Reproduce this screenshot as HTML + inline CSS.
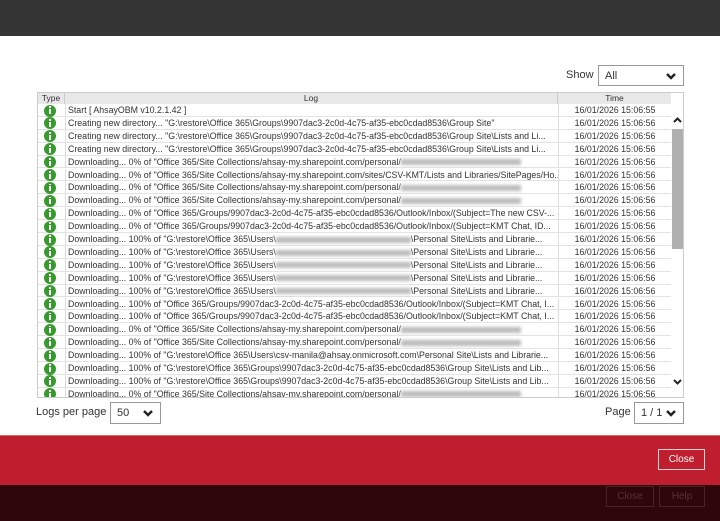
<!DOCTYPE html>
<html><head><meta charset="utf-8"><style>
*{margin:0;padding:0;box-sizing:border-box}
body{width:720px;height:521px;overflow:hidden;background:#fff;font-family:"Liberation Sans",sans-serif;position:relative;color:#333}
.top{position:absolute;left:0;top:0;width:720px;height:36px;background:#353535}
.red{position:absolute;left:0;top:435px;width:720px;height:50px;background:#be1e2d;border-top:1px solid #d66}
.dark{position:absolute;left:0;top:485px;width:720px;height:36px;background:#2d070c}
.sel{position:absolute;border:1px solid #999;background:#fff;font-size:11px;padding:4px 6px;color:#333}
.chev{position:absolute;right:6px;top:5px;width:12px;height:10px}
.tbl{position:absolute;left:37px;top:92px;width:647px;height:306px;border:1px solid #ccc;overflow:hidden}
.hdr{position:absolute;left:0;top:0;height:11px;width:633px;background:#e8e8e8;font-size:8.5px;line-height:11px;color:#333}
.hdr div{position:absolute;top:0;height:11px;text-align:center;border-right:1px solid #ccc}
.row{position:absolute;left:0;width:633px;height:12.9px;border-bottom:1px solid #e3e3e3;font-size:8.8px;line-height:12px;white-space:nowrap;color:#333}
.ic{position:absolute;left:6px;top:0.5px;width:12px;height:12px;border-radius:50%;background:#389a2e}
.ic:after{content:"";position:absolute;left:5px;top:4.5px;width:2.2px;height:5px;background:#fff}
.ic:before{content:"";position:absolute;left:5px;top:1.8px;width:2.2px;height:1.8px;background:#fff}
.lg{position:absolute;left:27px;top:0;width:493px;border-left:1px solid #ddd;padding-left:2px;overflow:hidden;height:12px}
.tm{position:absolute;left:520px;top:0;width:113px;border-left:1px solid #ddd;text-align:center}
.bl{display:inline-block;height:6px;background:#bbb;filter:blur(1.5px);vertical-align:middle}
.sb{position:absolute;left:633px;top:11px;width:13px;height:295px;background:#fff}
.btn{position:absolute;font-size:10px;text-align:center;line-height:19px}
</style></head><body>
<div class="top"></div>
<div style="position:absolute;left:566px;top:69px;font-size:11px">Show</div>
<div class="sel" style="left:598px;top:65px;width:86px;height:21px">All<svg class="chev" viewBox="0 0 12 10"><path d="M2 3l4 4 4-4" stroke="#222" stroke-width="2.4" fill="none"/></svg></div>
<div class="tbl">
<div class="hdr"><div style="left:0;width:27px">Type</div><div style="left:27px;width:493px">Log</div><div style="left:520px;width:113px;border:0">Time</div></div>
<div id="rows"></div>
<div class="sb"><svg style="position:absolute;left:1px;top:12px" width="11" height="8"><path d="M2 6l3.5-3.5L9 6" stroke="#222" stroke-width="2" fill="none"/></svg>
<div style="position:absolute;left:1px;top:25px;width:12px;height:120px;background:#b0b0b0"></div>
<svg style="position:absolute;left:1px;top:274px" width="11" height="8"><path d="M2 2l3.5 3.5L9 2" stroke="#222" stroke-width="2" fill="none"/></svg></div>
</div>
<div style="position:absolute;left:36px;top:406px;font-size:11px">Logs per page</div>
<div class="sel" style="left:110px;top:402px;width:51px;height:22px">50<svg class="chev" viewBox="0 0 12 10"><path d="M2 3l4 4 4-4" stroke="#222" stroke-width="2.4" fill="none"/></svg></div>
<div style="position:absolute;left:605px;top:406px;font-size:11px">Page</div>
<div class="sel" style="left:634px;top:402px;width:50px;height:22px">1 / 1<svg class="chev" viewBox="0 0 12 10"><path d="M2 3l4 4 4-4" stroke="#222" stroke-width="2.4" fill="none"/></svg></div>
<div class="red"></div>
<div class="btn" style="left:658px;top:449px;width:47px;height:21px;border:1.5px solid #f3d0d3;color:#fff">Close</div>
<div class="dark"></div>
<div class="btn" style="left:606px;top:486px;width:48px;height:21px;border:1px solid #4a2328;color:#5a3035">Close</div>
<div class="btn" style="left:659px;top:486px;width:46px;height:21px;border:1px solid #4a2328;color:#5a3035">Help</div>
<script>
var B='<span class="bl" style="width:120px"></span>';
var L=['Start [ AhsayOBM v10.2.1.42 ]',
'Creating new directory... "G:\\restore\\Office 365\\Groups\\9907dac3-2c0d-4c75-af35-ebc0cdad8536\\Group Site"',
'Creating new directory... "G:\\restore\\Office 365\\Groups\\9907dac3-2c0d-4c75-af35-ebc0cdad8536\\Group Site\\Lists and Li...',
'Creating new directory... "G:\\restore\\Office 365\\Groups\\9907dac3-2c0d-4c75-af35-ebc0cdad8536\\Group Site\\Lists and Li...',
'Downloading... 0% of "Office 365/Site Collections/ahsay-my.sharepoint.com/personal/'+B,
'Downloading... 0% of "Office 365/Site Collections/ahsay-my.sharepoint.com/sites/CSV-KMT/Lists and Libraries/SitePages/Ho...',
'Downloading... 0% of "Office 365/Site Collections/ahsay-my.sharepoint.com/personal/'+B,
'Downloading... 0% of "Office 365/Site Collections/ahsay-my.sharepoint.com/personal/'+B,
'Downloading... 0% of "Office 365/Groups/9907dac3-2c0d-4c75-af35-ebc0cdad8536/Outlook/Inbox/(Subject=The new CSV-...',
'Downloading... 0% of "Office 365/Groups/9907dac3-2c0d-4c75-af35-ebc0cdad8536/Outlook/Inbox/(Subject=KMT Chat, ID...'];
var P='Downloading... 100% of "G:\\restore\\Office 365\\Users\\<span class="bl" style="width:135px"></span>\\Personal Site\\Lists and Librarie...';
for(var i=0;i<5;i++)L.push(P);
L.push('Downloading... 100% of "Office 365/Groups/9907dac3-2c0d-4c75-af35-ebc0cdad8536/Outlook/Inbox/(Subject=KMT Chat, I...');
L.push('Downloading... 100% of "Office 365/Groups/9907dac3-2c0d-4c75-af35-ebc0cdad8536/Outlook/Inbox/(Subject=KMT Chat, I...');
L.push('Downloading... 0% of "Office 365/Site Collections/ahsay-my.sharepoint.com/personal/'+B);
L.push('Downloading... 0% of "Office 365/Site Collections/ahsay-my.sharepoint.com/personal/'+B);
L.push('Downloading... 100% of "G:\\restore\\Office 365\\Users\\csv-manila@ahsay.onmicrosoft.com\\Personal Site\\Lists and Librarie...');
L.push('Downloading... 100% of "G:\\restore\\Office 365\\Groups\\9907dac3-2c0d-4c75-af35-ebc0cdad8536\\Group Site\\Lists and Lib...');
L.push('Downloading... 100% of "G:\\restore\\Office 365\\Groups\\9907dac3-2c0d-4c75-af35-ebc0cdad8536\\Group Site\\Lists and Lib...');
L.push('Downloading... 0% of "Office 365/Site Collections/ahsay-my.sharepoint.com/personal/'+B);
var h='';
for(var i=0;i<L.length;i++){h+='<div class="row" style="top:'+(11+i*12.9)+'px"><div class="ic"></div><div class="lg">'+L[i]+'</div><div class="tm">16/01/2026 15:06:5'+(i?6:5)+'</div></div>';}
document.getElementById('rows').innerHTML=h;
</script>
</body></html>
